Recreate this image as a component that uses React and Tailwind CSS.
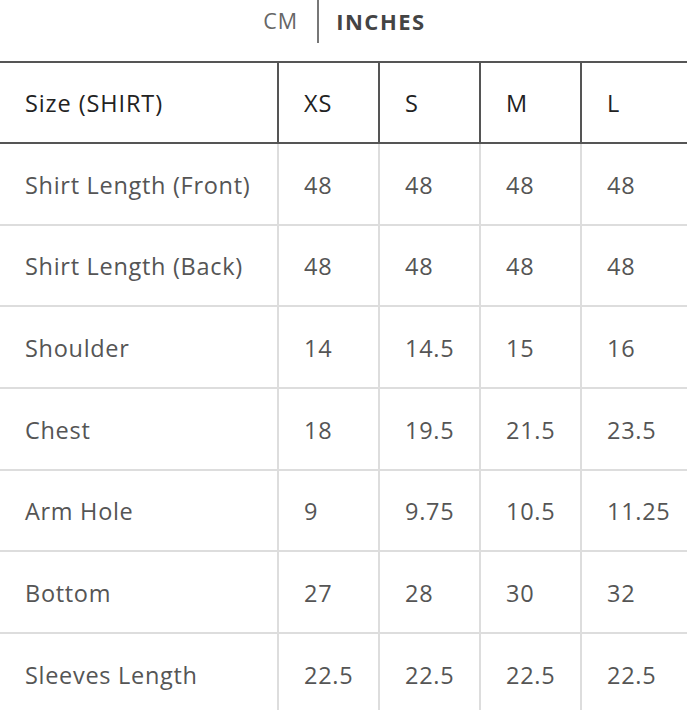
import React from "react";

const sizes = ["XS", "S", "M", "L"];
const rows = [
  ["Shirt Length (Front)", "48", "48", "48", "48"],
  ["Shirt Length (Back)", "48", "48", "48", "48"],
  ["Shoulder", "14", "14.5", "15", "16"],
  ["Chest", "18", "19.5", "21.5", "23.5"],
  ["Arm Hole", "9", "9.75", "10.5", "11.25"],
  ["Bottom", "27", "28", "30", "32"],
  ["Sleeves Length", "22.5", "22.5", "22.5", "22.5"],
];

export default function App() {
  return (
    <div
      className="w-[687px] h-[710px] overflow-hidden bg-white"
      style={{ fontFamily: "'Open Sans', 'Noto Sans', sans-serif" }}
    >
      <div className="h-[61px] flex justify-center items-start pl-[2px]">
        <div className="h-[43px] flex items-center pr-[19px] text-[21.5px] text-[#666] tracking-[1px]">
          CM
        </div>
        <div className="w-[2px] h-[43px] bg-[#777]" />
        <div className="h-[43px] flex items-center pl-[17px] text-[22px] font-bold text-[#444] tracking-[1.5px]">
          INCHES
        </div>
      </div>
      <div className="border-t-2 border-[#555]">
        <div className="flex h-[81px] border-b-2 border-[#555] text-[23.5px] text-[#222] tracking-[0.9px]">
          <div className="w-[279px] shrink-0 border-r-2 border-[#555] pl-[25px] pt-[2px] flex items-center">
            Size (SHIRT)
          </div>
          {sizes.map((s, i) => (
            <div
              key={s}
              className={
                i === 3
                  ? "flex-1 pl-[25px] pt-[2px] flex items-center"
                  : "w-[101px] shrink-0 border-r-2 border-[#555] pl-[25px] pt-[2px] flex items-center"
              }
            >
              {s}
            </div>
          ))}
        </div>
        {rows.map((r) => (
          <div
            key={r[0]}
            className="flex h-[81.67px] border-b-2 border-[#ddd] text-[23.5px] text-[#555] tracking-[0.7px]"
          >
            <div className="w-[279px] shrink-0 border-r-2 border-[#ddd] pl-[25px] pt-[3px] flex items-center">
              {r[0]}
            </div>
            {r.slice(1).map((v, i) => (
              <div
                key={i}
                className={
                  i === 3
                    ? "flex-1 pl-[25px] pt-[3px] flex items-center"
                    : "w-[101px] shrink-0 border-r-2 border-[#ddd] pl-[25px] pt-[3px] flex items-center"
                }
              >
                {v}
              </div>
            ))}
          </div>
        ))}
      </div>
    </div>
  );
}
